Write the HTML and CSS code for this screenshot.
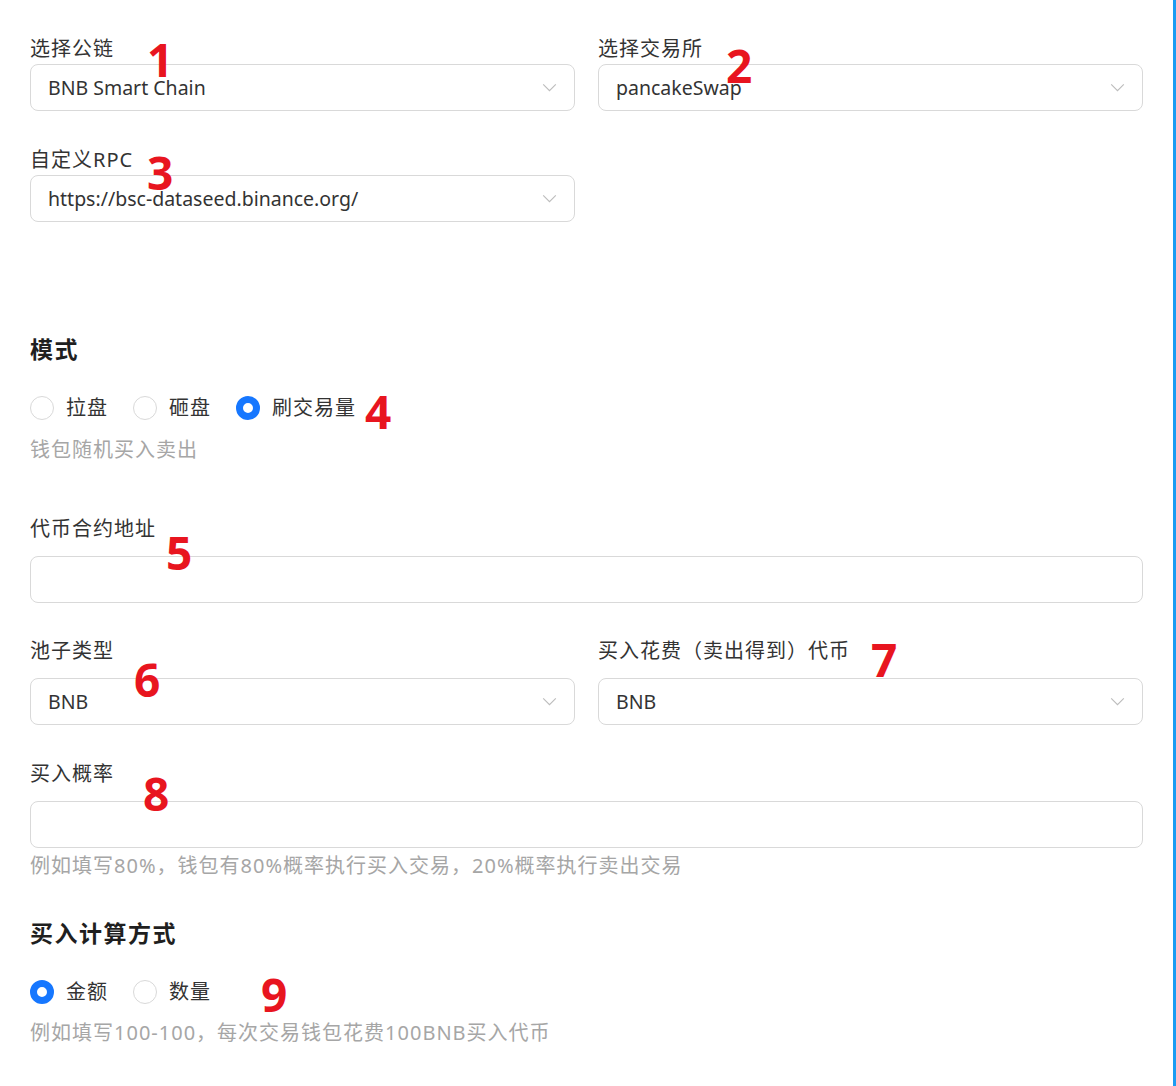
FILE: index.html
```html
<!DOCTYPE html>
<html lang="zh-CN">
<head>
<meta charset="utf-8">
<link rel="stylesheet" href="styles.css">
</head>
<body>
<div class="page">
  <div class="row row-first">
    <div class="field">
      <div class="label label-tight">选择公链</div>
      <div class="select">
        <span class="value">BNB Smart Chain</span>
        <svg class="chev" viewBox="0 0 16 10"><path d="M1 1.5 L8 8.5 L15 1.5"/></svg>
      </div>
      <span class="mark m1">1</span>
    </div>
    <div class="field">
      <div class="label label-tight">选择交易所</div>
      <div class="select">
        <span class="value">pancakeSwap</span>
        <svg class="chev" viewBox="0 0 16 10"><path d="M1 1.5 L8 8.5 L15 1.5"/></svg>
      </div>
      <span class="mark m2">2</span>
    </div>
  </div>

  <div class="row row-rpc">
    <div class="field">
      <div class="label label-tight">自定义RPC</div>
      <div class="select">
        <span class="value">https://bsc-dataseed.binance.org/</span>
        <svg class="chev" viewBox="0 0 16 10"><path d="M1 1.5 L8 8.5 L15 1.5"/></svg>
      </div>
      <span class="mark m3">3</span>
    </div>
  </div>

  <h3 class="heading heading-mode">模式</h3>
  <div class="radios radios-mode">
    <label class="radio"><span class="dot"></span><span class="rtext">拉盘</span></label>
    <label class="radio"><span class="dot"></span><span class="rtext">砸盘</span></label>
    <label class="radio"><span class="dot checked"></span><span class="rtext">刷交易量</span></label>
    <span class="mark m4">4</span>
  </div>
  <div class="help help-mode">钱包随机买入卖出</div>

  <div class="field field-token">
    <div class="label">代币合约地址</div>
    <div class="input"></div>
    <span class="mark m5">5</span>
  </div>

  <div class="row row-pool">
    <div class="field">
      <div class="label">池子类型</div>
      <div class="select">
        <span class="value">BNB</span>
        <svg class="chev" viewBox="0 0 16 10"><path d="M1 1.5 L8 8.5 L15 1.5"/></svg>
      </div>
      <span class="mark m6">6</span>
    </div>
    <div class="field">
      <div class="label">买入花费（卖出得到）代币</div>
      <div class="select">
        <span class="value">BNB</span>
        <svg class="chev" viewBox="0 0 16 10"><path d="M1 1.5 L8 8.5 L15 1.5"/></svg>
      </div>
      <span class="mark m7">7</span>
    </div>
  </div>

  <div class="field field-prob">
    <div class="label">买入概率</div>
    <div class="input"></div>
    <span class="mark m8">8</span>
  </div>
  <div class="help help-prob">例如填写80%，钱包有80%概率执行买入交易，20%概率执行卖出交易</div>

  <h3 class="heading heading-calc">买入计算方式</h3>
  <div class="radios radios-calc">
    <label class="radio"><span class="dot checked"></span><span class="rtext">金额</span></label>
    <label class="radio"><span class="dot"></span><span class="rtext">数量</span></label>
    <span class="mark m9">9</span>
  </div>
  <div class="help help-calc">例如填写100-100，每次交易钱包花费100BNB买入代币</div>
</div>
</body>
</html>
```

FILE: styles.css
```css
html, body {
  margin: 0;
  padding: 0;
  background: #ffffff;
}

body {
  font-family: "Noto Sans", "Noto Sans CJK SC", sans-serif;
  color: #2f2f2f;
}

.page {
  width: 1113px;
  min-height: 1086px;
  box-sizing: content-box;
  padding: 37px 30px 0 30px;
  border-right: 3px solid #1b9cf2;
  position: relative;
}

.row {
  display: grid;
  grid-template-columns: 545px 545px;
  column-gap: 23px;
}

.row-rpc { margin-top: 37px; }
.row-pool { margin-top: 36px; }

.field {
  position: relative;
}

.label {
  font-size: 20px;
  letter-spacing: 1px;
  line-height: 24px;
  color: #333333;
  margin-bottom: 15px;
}

.label-tight { margin-bottom: 3px; }

.select, .input {
  height: 47px;
  box-sizing: border-box;
  border: 1px solid #d9d9d9;
  border-radius: 8px;
  background: #fff;
  display: flex;
  align-items: center;
  padding: 0 17px;
}

.value {
  flex: 1;
  font-size: 19.5px;
  color: #333333;
  white-space: nowrap;
}

.chev {
  width: 15px;
  height: 9px;
  fill: none;
  stroke: #bdbdbd;
  stroke-width: 1.3;
  flex: none;
}

.heading {
  margin: 0;
  font-size: 23px;
  letter-spacing: 1.5px;
  line-height: 30px;
  font-weight: 700;
  color: #1f1f1f;
}

.heading-mode { margin-top: 112px; }
.heading-calc { margin-top: 40px; }

.radios {
  display: flex;
  align-items: center;
  height: 24px;
  position: relative;
}

.radios-mode { margin-top: 32px; }
.radios-calc { margin-top: 32px; }

.radio {
  display: flex;
  align-items: center;
  margin-right: 25px;
}

.dot {
  width: 24px;
  height: 24px;
  box-sizing: border-box;
  border: 1px solid #d9d9d9;
  border-radius: 50%;
  background: #fff;
  flex: none;
}

.dot.checked {
  border: 7.5px solid #1677ff;
  background: #fff;
}

.rtext {
  margin-left: 12px;
  font-size: 20px;
  letter-spacing: 1px;
  line-height: 24px;
  color: #333333;
}

.help {
  font-size: 20px;
  letter-spacing: 1px;
  line-height: 24px;
  color: #a6a6a6;
  white-space: nowrap;
}

.help-mode { margin-top: 18px; }
.help-prob { margin-top: 6px; }
.help-calc { margin-top: 17px; }

.field-token { margin-top: 55px; }
.field-prob { margin-top: 37px; }

.mark {
  position: absolute;
  font-family: "Open Sans", "Noto Sans", sans-serif;
  font-weight: 700;
  font-size: 46px;
  line-height: 1;
  color: #e8151f;
}

.m1 { left: 117px; top: -1px; }
.m2 { left: 128px; top: 5px; }
.m3 { left: 117px; top: 1px; }
.m4 { left: 335px; top: -8px; }
.m5 { left: 136px; top: 12px; }
.m6 { left: 104px; top: 17px; }
.m7 { left: 273px; top: -3px; }
.m8 { left: 113px; top: 8px; }
.m9 { left: 231px; top: -9px; }
```
